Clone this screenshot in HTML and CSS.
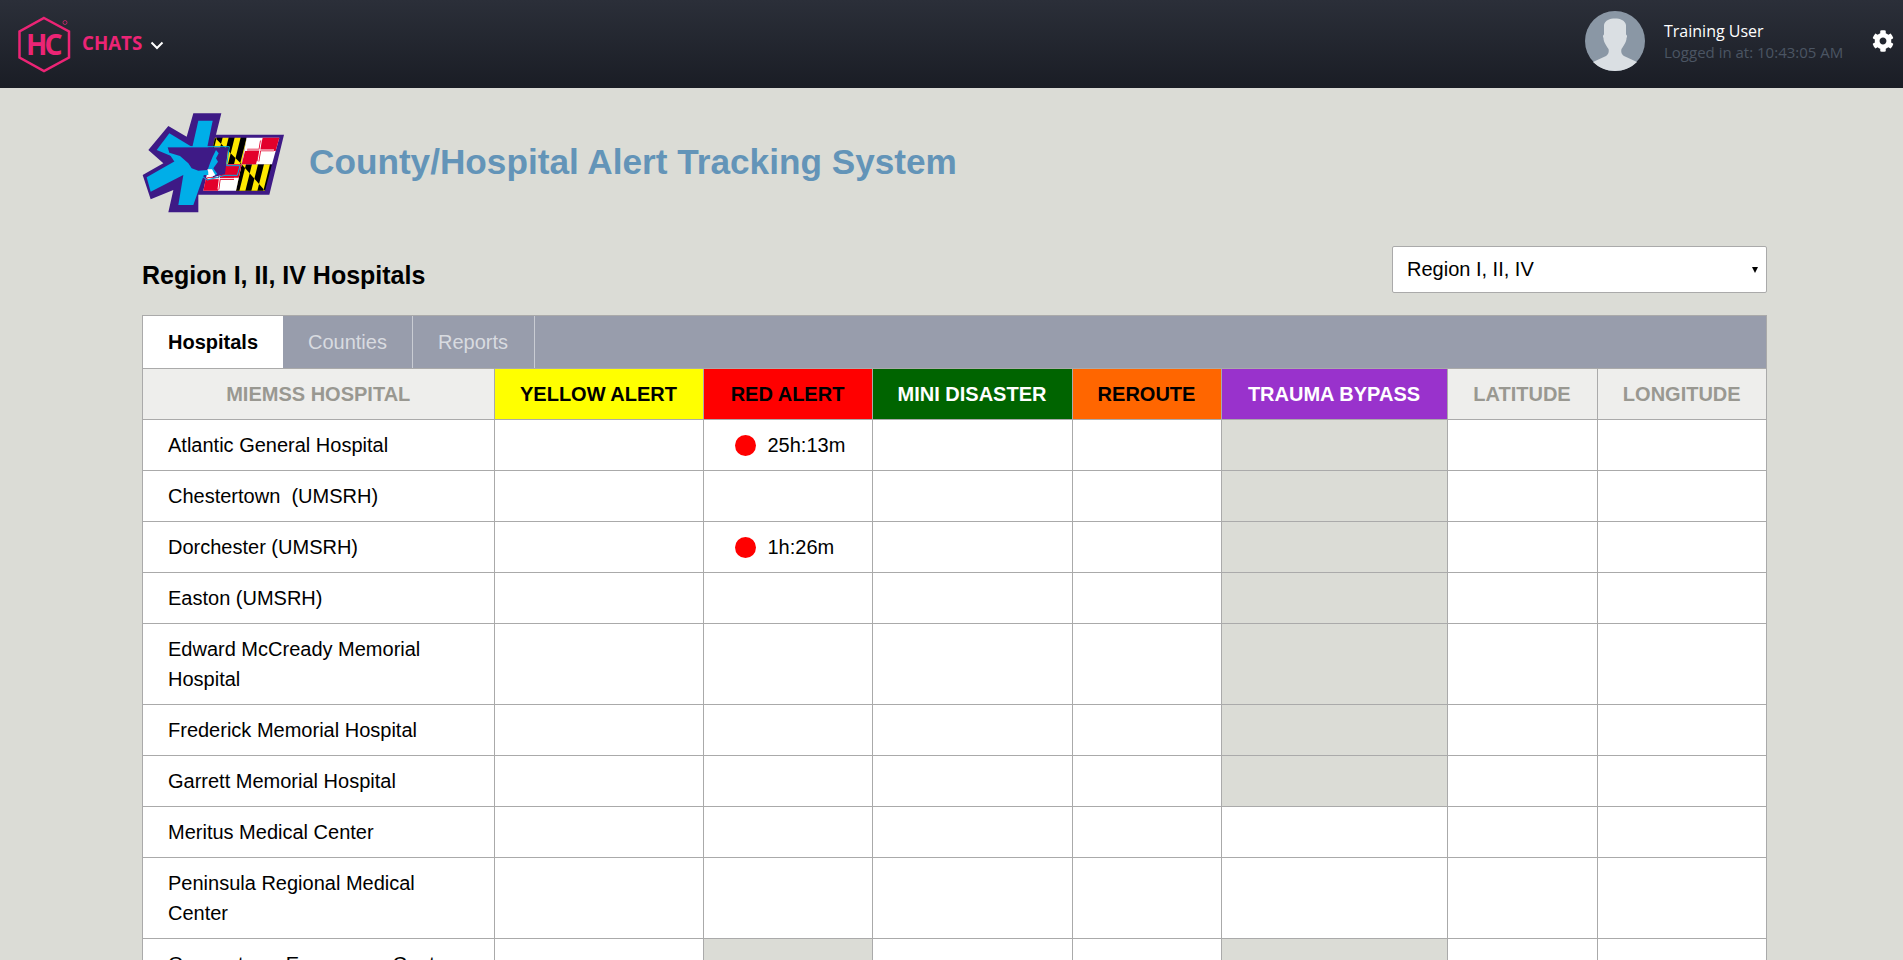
FILE: index.html
```html
<!DOCTYPE html>
<html lang="en">
  <head>
    <meta charset="UTF-8" />
    <title>County/Hospital Alert Tracking System</title>
    <link rel="stylesheet" href="styles.css">
  </head>
  <body>
    <div class="topbar">
      <div class="brand">
        <div class="hc-logo">
          <svg width="60" height="60" viewBox="0 0 60 60">
            <polygon points="26,2 51,15.500 51,41.500 26,55 1.500,41.500 1.500,15.500" fill="none" stroke="#ec2475" stroke-width="2.500" />
            <circle cx="47" cy="6.500" r="2" fill="none" stroke="#ec2475" stroke-width="0.700" />
          </svg>
          <span class="hc-text">HC</span>
        </div>
        <span class="brand-name">CHATS</span>
        <svg class="chevron" width="14" height="9" viewBox="0 0 14 9">
          <polyline points="1.500,1.500 7,7 12.500,1.500" fill="none" stroke="#fff" stroke-width="2" />
        </svg>
      </div>
      <div class="user">
        <svg class="avatar" width="60" height="60" viewBox="0 0 60 60">
          <circle cx="30" cy="30" r="30" fill="#8a97a5" />
          <path d="M8 51 L21 45 C24 43 24 40 23.500 38 C20 33 18.500 30 18.500 27 C17.500 26 18 24 19 23.500 L19 14 C20 9 25 7.500 30 7.500 C35 7.500 40 9 41 14 L41 23.500 C42 24 42.500 26 41.500 27 C41.500 30 40 33 36.500 38 C36 40 36 43 39 45 L52 51 C46 57 38 60 30 60 C22 60 14 57 8 51 Z" fill="#dadfe3" />
        </svg>
        <div class="user-info">
          <div class="user-name">Training User</div>
          <div class="user-login">Logged in at: 10:43:05 AM</div>
        </div>
        <svg class="gear" width="22" height="22" viewBox="0 0 512 512">
          <path fill="#fff" d="M487.4 315.7l-42.6-24.6c4.3-23.2 4.3-47 0-70.2l42.6-24.6c4.9-2.8 7.1-8.6 5.5-14-11.1-35.6-30-67.8-54.7-94.6-3.8-4.1-10-5.1-14.8-2.3L380.8 110c-17.9-15.4-38.5-27.3-60.8-35.1V25.8c0-5.6-3.9-10.5-9.4-11.7-36.7-8.2-74.3-7.8-109.2 0-5.5 1.2-9.4 6.1-9.4 11.7V75c-22.2 7.9-42.8 19.8-60.8 35.1L88.7 85.5c-4.9-2.8-11-1.9-14.8 2.3-24.7 26.7-43.6 58.9-54.7 94.6-1.7 5.4.6 11.2 5.5 14L67.3 221c-4.3 23.2-4.3 47 0 70.2l-42.6 24.6c-4.9 2.8-7.1 8.6-5.5 14 11.1 35.6 30 67.8 54.7 94.6 3.8 4.1 10 5.1 14.8 2.3l42.6-24.6c17.9 15.4 38.5 27.3 60.8 35.1v49.2c0 5.6 3.9 10.5 9.4 11.7 36.7 8.2 74.3 7.8 109.2 0 5.5-1.2 9.4-6.1 9.4-11.7v-49.2c22.2-7.9 42.8-19.8 60.8-35.1l42.6 24.6c4.9 2.8 11 1.9 14.8-2.3 24.7-26.7 43.6-58.9 54.7-94.6 1.500-5.500-.7-11.300-5.600-14.100zM256 336c-44.1 0-80-35.9-80-80s35.9-80 80-80 80 35.9 80 80-35.900 80-80 80z" />
        </svg>
      </div>
    </div>

    <div class="page">
      <div class="title-row">
        <!-- star of life + maryland flag -->
        <svg class="logo" width="143" height="100" viewBox="36 39 429 300">
          <defs>
            <pattern id="paly-a" width="36" height="80" patternUnits="userSpaceOnUse" patternTransform="skewX(-14)">
              <rect width="36" height="80" fill="#ffe800" />
              <rect width="18" height="80" fill="#000" />
            </pattern>
            <pattern id="paly-b" width="36" height="80" patternUnits="userSpaceOnUse" patternTransform="skewX(-14)">
              <rect width="36" height="80" fill="#000" />
              <rect width="18" height="80" fill="#ffe800" />
            </pattern>
          </defs>
          <polygon fill="#3e1a86" points="190,40 274,40 258,104 462,104 418,284 205,284 205,337 115,337 130,270 62,298 38,225 100,190 55,150 115,78 170,110" />

          <polygon fill="url(#paly-a)" points="255,113 350,113 335,193 237,193" />
          <polygon fill="url(#paly-b)" points="255,113 335,193 237,193" />
          <polygon fill="url(#paly-a)" points="335,193 426,193 405,272 318,272" />
          <polygon fill="url(#paly-b)" points="335,193 405,272 318,272" />

          <polygon fill="#fff" points="350,113 448,113 426,193 335,193" />
          <polygon fill="#e3002b" points="398,113 448,113 437,153 388,153" />
          <polygon fill="#e3002b" points="345,153 388,153 378,193 335,193" />
          <path d="M394 122 L384 184 M352 150 L432 150" stroke="#e3002b" stroke-width="8" fill="none" />
          <path d="M394 122 L384 184 M352 150 L432 150" stroke="#fff" stroke-width="3" fill="none" />

          <polygon fill="#fff" points="237,193 335,193 318,272 220,272" />
          <polygon fill="#e3002b" points="228,233 272,233 264,272 220,272" />
          <polygon fill="#e3002b" points="272,193 335,193 326,233 272,233" />
          <path d="M272 205 L264 268 M232 236 L312 236" stroke="#e3002b" stroke-width="8" fill="none" />
          <path d="M272 205 L264 268 M232 236 L312 236" stroke="#fff" stroke-width="3" fill="none" />

          <polygon fill="#00aee8" points="205,62 248,62 230,150 185,150" />
          <polygon fill="#00aee8" points="118,100 185,140 165,185 80,150" />
          <polygon fill="#00aee8" points="50,232 150,175 170,220 62,275" />
          <polygon fill="#00aee8" points="165,195 225,215 190,315 145,315" />
          <polygon fill="#00aee8" points="115,140 235,140 235,225 160,225 120,165" />

          <polygon fill="#3e1a86" points="113,142 295,142 288,197 285,222 250,232 232,210 205,212 185,205 175,190 150,168 118,158" />
          <polygon fill="#00aee8" points="258,150 266,160 258,175 264,185 250,205 262,222 245,230 232,212 240,190 248,170" />
          <polygon fill="#fff" points="232,208 246,208 256,226 240,232" />
          <polyline points="112,140 298,140 290,197 330,197 322,226 285,226 232,240 215,228" fill="none" stroke="#00aee8" stroke-width="3" />
        </svg>
        <h1 class="app-title">County/Hospital Alert Tracking System</h1>
      </div>

      <div class="region-row">
        <h2 class="region-title">Region I, II, IV Hospitals</h2>
        <div class="region-select">Region I, II, IV<span class="arrow"></span></div>
      </div>

      <div class="panel">
        <div class="tabs">
          <div class="tab tab-active">Hospitals</div>
          <div class="tab tab-counties">Counties</div>
          <div class="tab tab-reports">Reports</div>
        </div>
        <table class="alerts">
          <colgroup>
            <col class="c-name" /><col class="c-yellow" /><col class="c-red" /><col class="c-mini" />
            <col class="c-reroute" /><col class="c-trauma" /><col class="c-lat" /><col class="c-long" />
          </colgroup>
          <thead>
            <tr>
              <th>MIEMSS HOSPITAL</th>
              <th class="h-yellow">YELLOW ALERT</th>
              <th class="h-red">RED ALERT</th>
              <th class="h-mini">MINI DISASTER</th>
              <th class="h-reroute">REROUTE</th>
              <th class="h-trauma">TRAUMA BYPASS</th>
              <th>LATITUDE</th>
              <th>LONGITUDE</th>
            </tr>
          </thead>
          <tbody>
            <tr><td>Atlantic General Hospital</td><td></td><td class="timer"><span class="dot"></span>25h:13m</td><td></td><td></td><td class="off"></td><td></td><td></td></tr>
            <tr><td>Chestertown &nbsp;(UMSRH)</td><td></td><td></td><td></td><td></td><td class="off"></td><td></td><td></td></tr>
            <tr><td>Dorchester (UMSRH)</td><td></td><td class="timer"><span class="dot"></span>1h:26m</td><td></td><td></td><td class="off"></td><td></td><td></td></tr>
            <tr><td>Easton (UMSRH)</td><td></td><td></td><td></td><td></td><td class="off"></td><td></td><td></td></tr>
            <tr><td>Edward McCready Memorial Hospital</td><td></td><td></td><td></td><td></td><td class="off"></td><td></td><td></td></tr>
            <tr><td>Frederick Memorial Hospital</td><td></td><td></td><td></td><td></td><td class="off"></td><td></td><td></td></tr>
            <tr><td>Garrett Memorial Hospital</td><td></td><td></td><td></td><td></td><td class="off"></td><td></td><td></td></tr>
            <tr><td>Meritus Medical Center</td><td></td><td></td><td></td><td></td><td></td><td></td><td></td></tr>
            <tr><td>Peninsula Regional Medical Center</td><td></td><td></td><td></td><td></td><td></td><td></td><td></td></tr>
            <tr><td>Queenstown Emergency Center</td><td></td><td class="off"></td><td></td><td></td><td class="off"></td><td></td><td></td></tr>
          </tbody>
        </table>
      </div>
    </div>
  </body>
</html>
```

FILE: styles.css
```css
* {
  margin: 0;
  padding: 0;
  box-sizing: border-box;
}
html,
body {
  height: 100vh;
  overflow: hidden;
}
body {
  background-color: #dbdcd6;
  font-family: "Liberation Sans", Arial, sans-serif;
  color: #000;
}

/* top bar */
.topbar {
  height: 88px;
  background: linear-gradient(to bottom, #2b2f39, #1a1d25);
  display: flex;
  justify-content: space-between;
  align-items: center;
  font-family: "Open Sans", sans-serif;
}
.brand {
  display: flex;
  align-items: center;
  padding-left: 18px;
}
.hc-logo {
  position: relative;
  width: 60px;
  height: 60px;
  margin-top: 4px;
}
.hc-text {
  position: absolute;
  left: 8px;
  top: 12px;
  font-family: "Noto Sans", sans-serif;
  font-size: 28px;
  line-height: 32px;
  letter-spacing: -3px;
  font-weight: 700;
  color: #ec2475;
}
.brand-name {
  margin-left: 4px;
  margin-bottom: 3px;
  font-size: 18.700px;
  font-weight: 700;
  color: #ec2475;
}
.chevron {
  margin-left: 8px;
  margin-top: 3px;
}
.user {
  display: flex;
  align-items: center;
  margin-bottom: 6px;
}
.avatar {
  margin-right: 19px;
}
.user-info {
  width: 195px;
  margin-top: 1px;
}
.user-name {
  font-size: 16px;
  line-height: 22px;
  color: #fff;
}
.user-login {
  font-size: 15px;
  line-height: 21px;
  color: #4b5563;
}
.gear {
  margin-left: 13px;
  margin-right: 9px;
}

/* page head */
.page {
  width: 1625px;
  margin-left: 142px;
}
.title-row {
  display: flex;
  align-items: center;
  height: 100px;
  margin-top: 25px;
}
.logo {
  flex: none;
}
.app-title {
  margin-left: 24px;
  margin-bottom: 2px;
  font-size: 35.200px;
  font-weight: 700;
  color: #6394b8;
}
.region-row {
  display: flex;
  justify-content: space-between;
  align-items: center;
  margin-top: 33px;
  height: 47px;
}
.region-title {
  font-size: 25px;
  font-weight: 700;
  padding-top: 12px;
}
.region-select {
  position: relative;
  width: 375px;
  height: 47px;
  background-color: #fff;
  border: 1px solid #aaa;
  border-radius: 2px;
  font-size: 20px;
  line-height: 44px;
  padding-left: 14px;
}
.arrow {
  position: absolute;
  right: 8px;
  top: 20px;
  border-left: 3px solid transparent;
  border-right: 3px solid transparent;
  border-top: 6px solid #000;
}

/* tabs + table */
.panel {
  margin-top: 22px;
  border: 1px solid #aaa;
  border-bottom: 0;
}
.tabs {
  display: flex;
  height: 53px;
  background-color: #989dac;
  border-bottom: 1px solid #aaa;
}
.tab {
  font-size: 20px;
  line-height: 52px;
  color: #d8dbe0;
  padding-left: 25px;
  border-right: 1px solid #c9ccd3;
}
.tab-active {
  width: 140px;
  background-color: #fff;
  color: #000;
  font-weight: 700;
  border-right: 0;
}
.tab-counties {
  width: 130px;
}
.tab-reports {
  width: 122px;
}
.alerts {
  width: 1623px;
  table-layout: fixed;
  border-collapse: collapse;
  background-color: #fff;
}
.c-name { width: 351px; }
.c-yellow { width: 209px; }
.c-red { width: 169px; }
.c-mini { width: 200px; }
.c-reroute { width: 149px; }
.c-trauma { width: 226px; }
.c-lat { width: 150px; }
.c-long { width: 169px; }
.alerts th {
  height: 50px;
  padding-top: 1px;
  background-color: #eeeeec;
  color: #999891;
  font-size: 20px;
  font-weight: 700;
  text-align: center;
  border-left: 1px solid #aaa;
  border-bottom: 1px solid #aaa;
}
.alerts th:first-child,
.alerts td:first-child {
  border-left: 0;
}
.alerts th.h-yellow {
  background-color: #ffff00;
  color: #000;
}
.alerts th.h-red {
  background-color: #ff0000;
  color: #000;
}
.alerts th.h-mini {
  background-color: #006400;
  color: #fff;
}
.alerts th.h-reroute {
  background-color: #ff6600;
  color: #000;
}
.alerts th.h-trauma {
  background-color: #9932cc;
  color: #fff;
}
.alerts td {
  font-size: 20px;
  line-height: 30px;
  padding: 10px 25px;
  border-left: 1px solid #aaa;
  border-bottom: 1px solid #aaa;
}
.alerts td.off {
  background-color: #dbdcd6;
}
.alerts td.timer {
  padding-left: 31px;
  padding-right: 0;
  white-space: nowrap;
}
.dot {
  display: inline-block;
  width: 21px;
  height: 21px;
  margin-right: 12px;
  border-radius: 50%;
  background-color: #ff0000;
  vertical-align: -4px;
}
```
